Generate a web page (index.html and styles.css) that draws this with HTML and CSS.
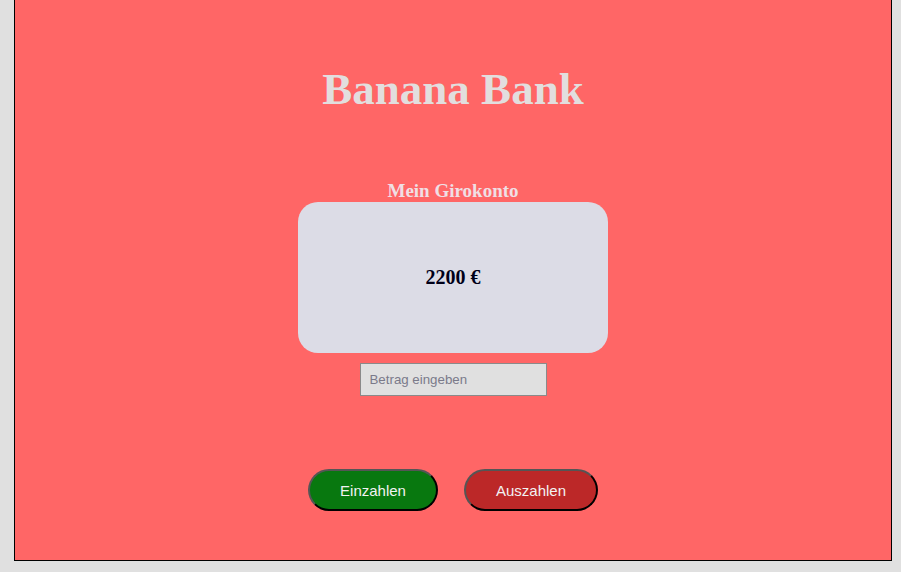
FILE: index.html
```html
<!DOCTYPE html>
<html lang="de">
<head>
<meta charset="utf-8">
<title>Banana Bank</title>
<link rel="stylesheet" href="styles.css">
</head>
<body>
<main class="app">
  <h1 class="title">Banana Bank</h1>
  <section class="account">
    <h2 class="account-name">Mein Girokonto</h2>
    <div class="card">
      <p class="balance">2200 €</p>
    </div>
    <input class="amount" type="text" placeholder="Betrag eingeben">
  </section>
  <div class="actions">
    <button class="btn btn-in">Einzahlen</button>
    <button class="btn btn-out">Auszahlen</button>
  </div>
</main>
</body>
</html>
```
FILE: styles.css
```css
html, body {
  margin: 0;
  padding: 0;
}
body {
  background: #e0e0e0;
  padding: 0 9px 11px 14px;
  font-family: "Liberation Serif", "Times New Roman", serif;
}
.app {
  box-sizing: border-box;
  height: 561px;
  background: #ff6666;
  border: 1px solid #000;
  border-top: none;
  display: flex;
  flex-direction: column;
  align-items: center;
}
.title {
  margin: 63px 0 0;
  font-size: 45px;
  line-height: 52px;
  font-weight: bold;
  color: #e2dede;
}
.account {
  display: flex;
  flex-direction: column;
  align-items: center;
  margin-top: 65px;
}
.account-name {
  margin: 0;
  font-size: 19px;
  line-height: 22px;
  font-weight: bold;
  color: #f0dfe4;
}
.card {
  box-sizing: border-box;
  width: 310px;
  height: 151px;
  border-radius: 20px;
  background: #dcdce6;
  display: flex;
  align-items: center;
  justify-content: center;
}
.balance {
  margin: 0;
  font-size: 20px;
  font-weight: bold;
  color: #000018;
}
.amount {
  box-sizing: border-box;
  margin-top: 10px;
  width: 187px;
  height: 33px;
  padding: 0 9px;
  border: 1px solid #8a8a8a;
  background: #e0e0e0;
  font-family: "Liberation Sans", Arial, sans-serif;
  font-size: 13.3px;
  color: #333;
}
.amount::placeholder {
  color: #7a7a8a;
}
.actions {
  display: flex;
  gap: 26px;
  margin-top: 73px;
}
.btn {
  box-sizing: border-box;
  height: 42px;
  border-radius: 21px;
  border: 2px solid #000;
  border-color: #555 #000 #000 #555;
  font-family: "Liberation Sans", Arial, sans-serif;
  font-size: 15px;
  color: #f2f2f2;
}
.btn-in {
  width: 130px;
  background: #08780f;
}
.btn-out {
  width: 134px;
  background: #bc2828;
}
```
